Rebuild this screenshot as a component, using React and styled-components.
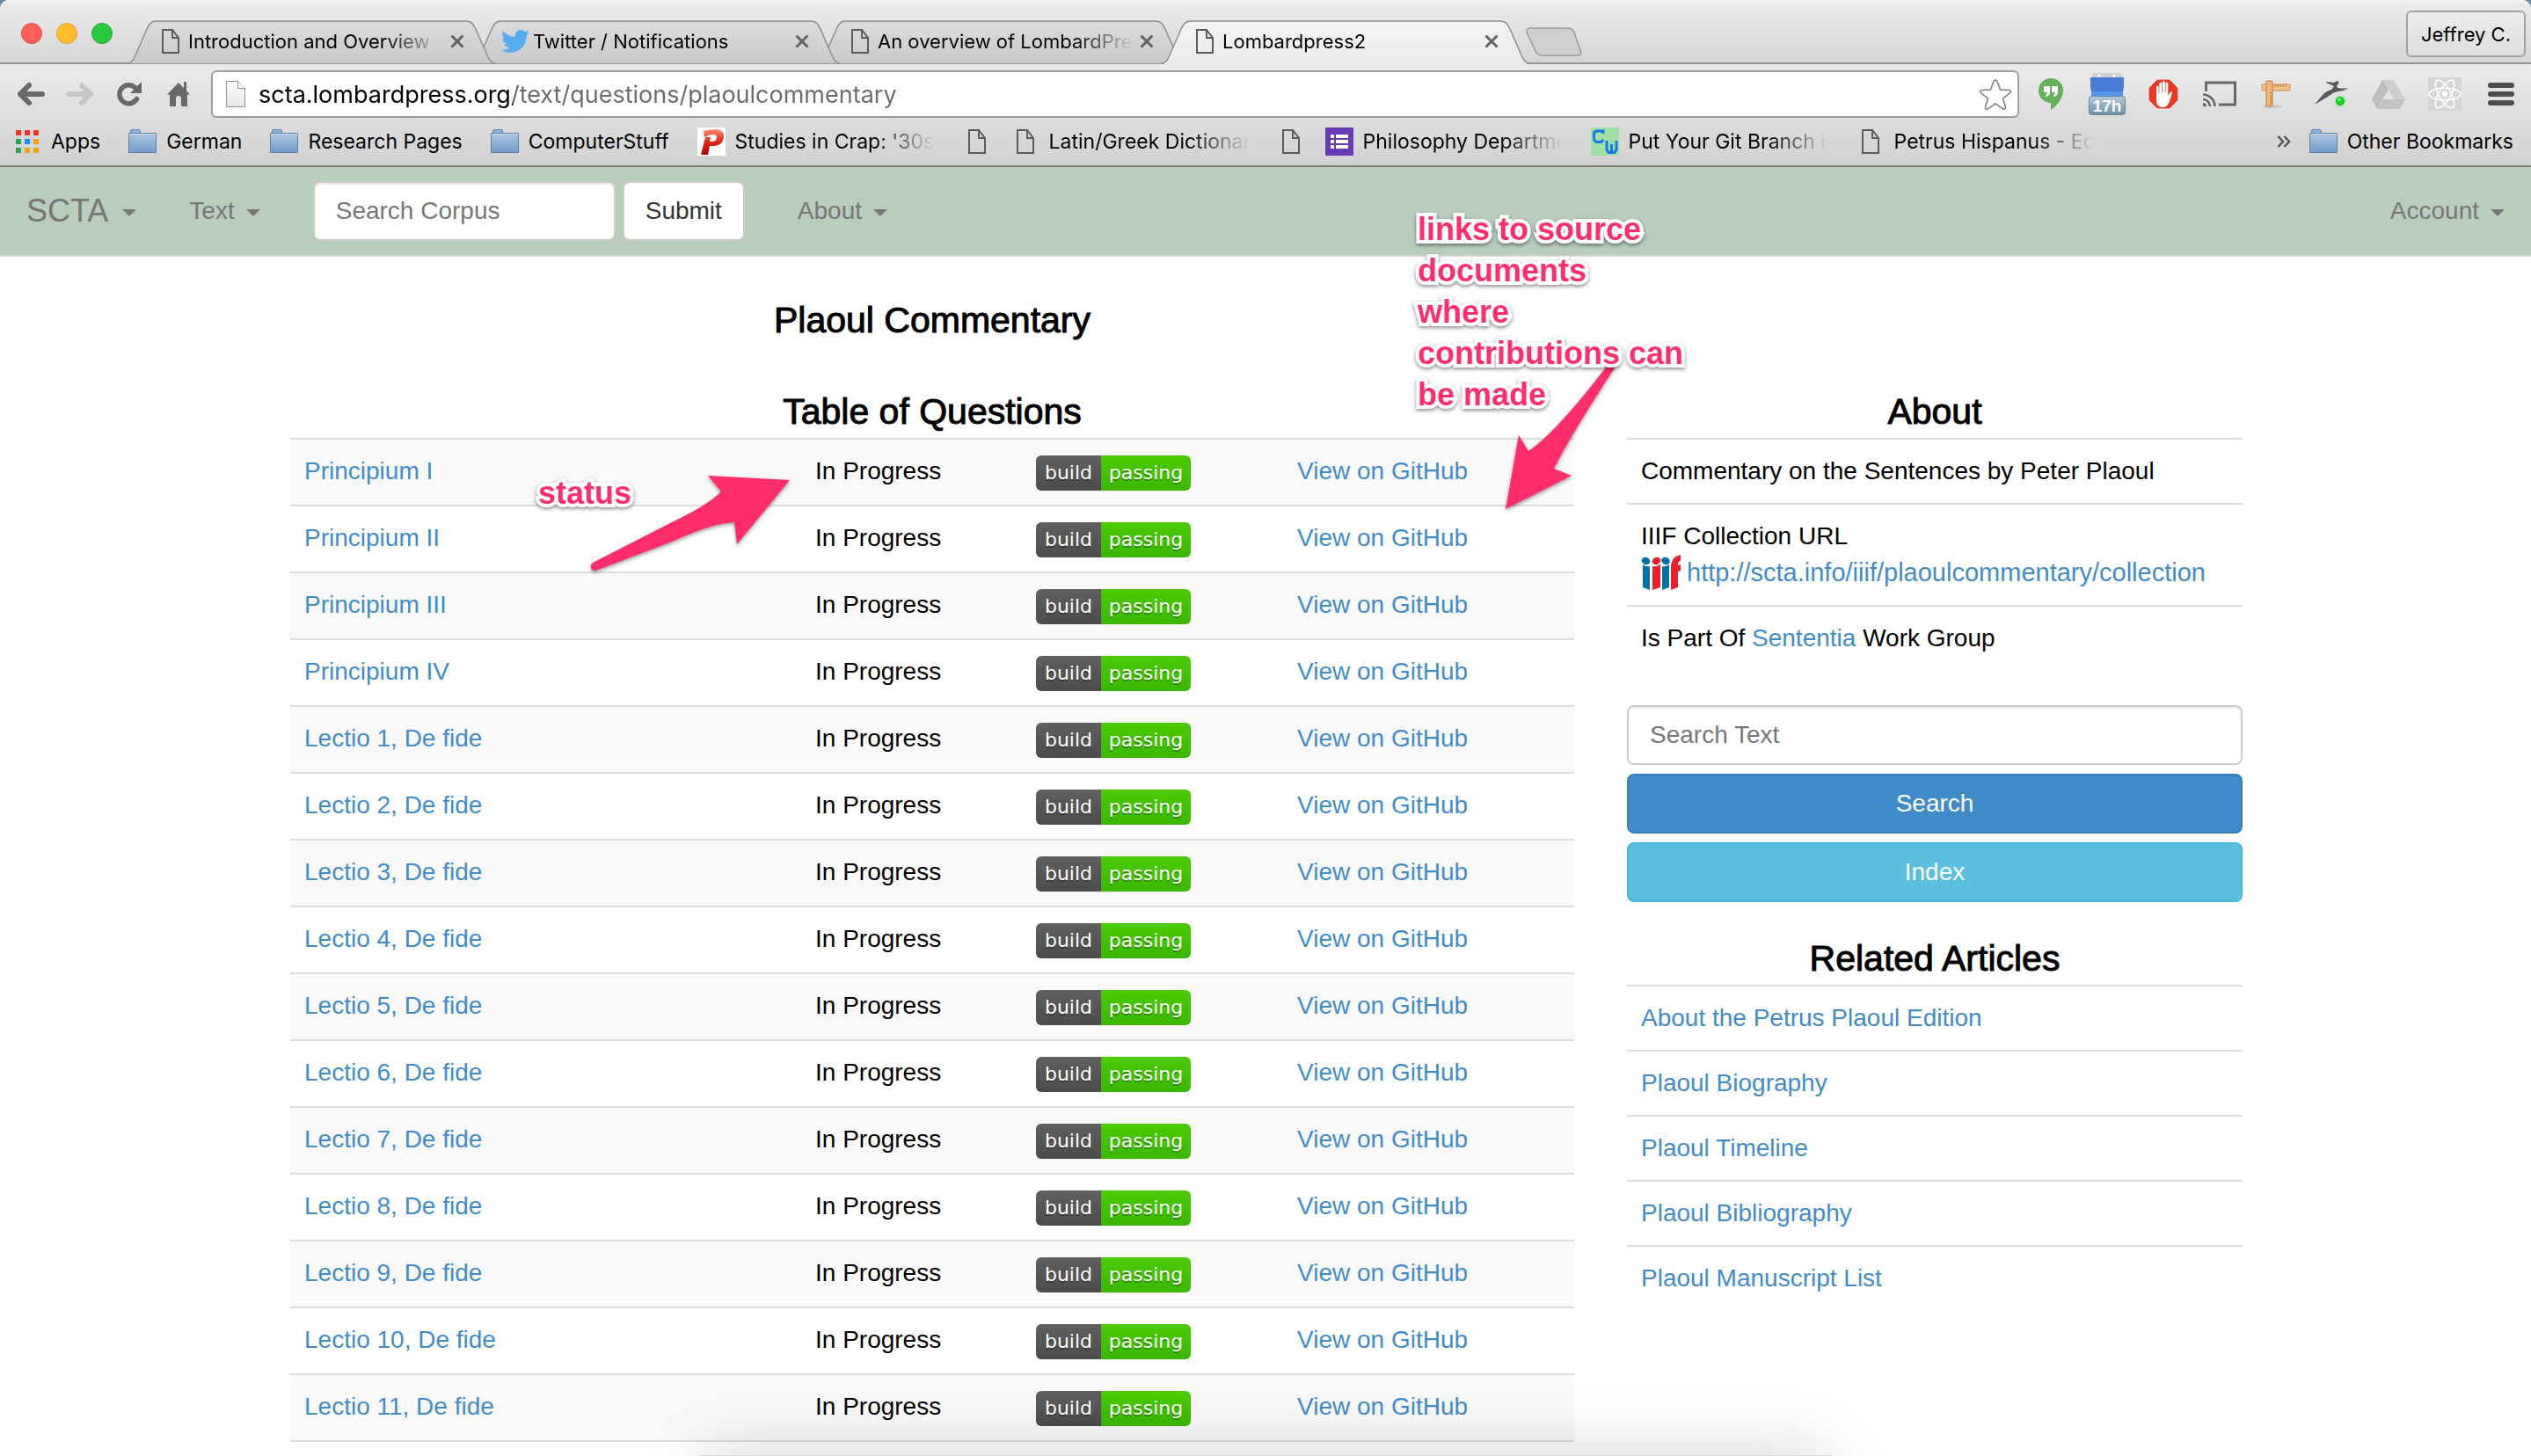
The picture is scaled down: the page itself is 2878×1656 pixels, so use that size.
import React from "react";
import styled, { createGlobalStyle, css } from "styled-components";
import { FaTwitter, FaReact } from "react-icons/fa";

const sans = `"Liberation Sans", Arial, Helvetica, sans-serif`;
const chromeFont = `Inter, Roboto, "Liberation Sans", sans-serif`;
const pink = "#ff2d6b";

const Global = createGlobalStyle`
  *, *::before, *::after { box-sizing: border-box; }
  body { margin: 0; background: #7189a3; font-family: ${sans}; font-size: 28px; line-height: 40px; color: #000; }
  button, input { font: inherit; color: inherit; margin: 0; }
  svg { display: block; flex: none; }
`;

/* ---------- window chrome ---------- */

const Window = styled.div`
  position: relative;
  display: flex;
  flex-direction: column;
  min-height: 100vh;
  overflow: hidden;
  background: #fff;
  border-radius: 10px 10px 0 0;
`;

const TabStrip = styled.header`
  display: flex;
  align-items: flex-end;
  height: 73px;
  padding: 0 6px 0 24px;
  background: linear-gradient(#f4f4f4, #eaeaea 6px, #d6d6d6);
  border-bottom: 2px solid #949494;
  font: 22px/30px ${chromeFont};
`;

const Lights = styled.div`
  display: flex;
  gap: 16px;
  width: 134px;
  padding-bottom: 21px;
`;

const Light = styled.button`
  width: 24px;
  height: 24px;
  padding: 0;
  border: 1px solid ${(p) => p.$edge};
  border-radius: 50%;
  background: ${(p) => p.$fill};
`;

const TabList = styled.nav`
  display: flex;
  isolation: isolate;
`;

const TabItem = styled.div`
  position: relative;
  z-index: ${(p) => p.$z};
  display: flex;
  align-items: center;
  width: 392px;
  height: 48px;
  padding: 0 22px 0 24px;
  gap: 8px;
`;

const TabShape = styled.svg`
  position: absolute;
  left: -14px;
  top: 0;
  width: 420px;
  height: 51px;
`;

const TabIcon = styled.span`
  position: relative;
  display: flex;
  justify-content: center;
  width: 24px;
  color: #55acee;
`;

const TabTitle = styled.a`
  position: relative;
  flex: 1;
  white-space: nowrap;
  color: #000;
  text-decoration: none;
  mask-image: linear-gradient(to right, #000 calc(100% - 70px), transparent);
`;

const CloseButton = styled.button`
  position: relative;
  width: 16px;
  height: 16px;
  padding: 0;
  border: 0;
  background: none;
`;

const NewTab = styled.button`
  align-self: flex-end;
  margin: 0 0 6px 8px;
  padding: 0;
  border: 0;
  background: none;
`;

const Profile = styled.button`
  height: 53px;
  margin: 0 0 6px auto;
  padding: 0 15px;
  border: 2px solid #a2a2a2;
  border-radius: 6px;
  background: linear-gradient(#ececec, #dedede);
`;

const Toolbars = styled.div`
  padding-top: 7px;
  border-bottom: 2px solid #7d7d7d;
  background: linear-gradient(#ebebeb, #d1d1d1);
  font: 23px/30px ${chromeFont};
`;

const AddressRow = styled.div`
  display: flex;
  align-items: center;
  padding: 0 2px 0 7px;
`;

const ToolButton = styled.button`
  display: flex;
  align-items: center;
  justify-content: center;
  width: ${(p) => p.$w || 56}px;
  height: 54px;
  padding: 0;
  border: 0;
  background: none;
`;

const Omnibox = styled.form`
  display: flex;
  flex: 1;
  align-items: center;
  height: 54px;
  margin: 0 4px 0 9px;
  padding: 0 6px 0 14px;
  border: 2px solid #9c9c9c;
  border-radius: 6px;
  background: #fff;
`;

const UrlInput = styled.input`
  flex: 1;
  min-width: 0;
  height: 40px;
  margin-left: 12px;
  padding: 0 0 0 2px;
  border: 0;
  outline: 0;
  font-size: 27px;
  background: linear-gradient(to right, #000 291px, #6a6a6a 0);
  background-clip: text;
  -webkit-text-fill-color: transparent;
`;

const Bookmarks = styled.nav`
  display: flex;
  align-items: center;
  height: 54px;
  padding: 0 20px 0 15px;
`;

const Bookmark = styled.a`
  display: flex;
  flex: none;
  align-items: center;
  gap: 11px;
  margin-right: ${(p) => (p.$bare ? 23 : 32)}px;
  color: #000;
  text-decoration: none;
  white-space: nowrap;
`;

const BookmarkIcon = styled.span`
  display: flex;
  justify-content: center;
  width: 32px;
  height: 32px;
  align-items: center;
`;

const BookmarkLabel = styled.span`
  ${(p) =>
    p.$cut &&
    css`
      width: 227px;
      mask-image: linear-gradient(to right, #000 calc(100% - 70px), transparent);
    `}
`;

const BookmarkEnd = styled.div`
  display: flex;
  align-items: center;
  gap: 21px;
  margin-left: auto;

  ${Bookmark} {
    margin-right: 0;
  }
`;

/* ---------- site navigation ---------- */

const Navbar = styled.nav`
  display: flex;
  align-items: center;
  height: 102px;
  background: #b9cdbd;
  border-bottom: 2px solid #d6d6d6;
`;

const NavItem = styled.button`
  display: flex;
  align-items: center;
  gap: ${(p) => (p.$brand ? 16 : 13)}px;
  padding: 30px;
  border: 0;
  background: none;
  color: #777;
  font-size: ${(p) => (p.$brand ? 36 : 28)}px;
  margin-left: ${(p) => (p.$end ? "auto" : 0)};

  &::after {
    content: "";
    margin-top: 4px;
    border: 8px solid transparent;
    border-top-color: #777;
    border-bottom: 0;
  }
`;

const NavForm = styled.form`
  display: flex;
  gap: 8px;
  padding: 0 30px;
`;

const field = css`
  height: 68px;
  padding: 0 24px;
  border: 2px solid #ccc;
  border-radius: 8px;
`;

const TextField = styled.input`
  ${field}
  width: ${(p) => (p.$block ? "100%" : "344px")};
  background: #fff;
  box-shadow: inset 0 2px 2px rgba(0, 0, 0, 0.075);

  &::placeholder {
    color: #777;
    opacity: 1;
  }
`;

const Button = styled.button`
  ${field}
  width: ${(p) => (p.$block ? "100%" : "auto")};
  background: ${(p) => p.$bg || "#fff"};
  border-color: ${(p) => p.$edge || "#ccc"};
  color: ${(p) => (p.$bg ? "#fff" : "#333")};
`;

/* ---------- page ---------- */

const Page = styled.main`
  display: grid;
  grid-template-columns: minmax(0, 1460fr) minmax(0, 700fr);
  column-gap: 60px;
  width: 100%;
  max-width: 2222px;
  margin: 0 auto;
  padding: 50px 0 16px 2px;
`;

const Heading = styled.h2`
  margin: 0 0 8px;
  font-size: 41px;
  line-height: 44px;
  font-weight: 400;
  text-align: center;
  -webkit-text-stroke: 1px #000;
`;

const Title = styled(Heading).attrs({ as: "h1" })`
  grid-column: 1;
  margin: 0 0 60px;
`;

const Column = styled.section`
  grid-column: ${(p) => p.$col};
`;

const Table = styled.table`
  width: 100%;
  border-spacing: 0;
  table-layout: fixed;
  border-bottom: 2px solid #ddd;

  td {
    padding: 16px;
    border-top: 2px solid #ddd;
    vertical-align: top;
  }
  tr:nth-child(odd) td {
    background: #f9f9f9;
  }
`;

const Col = styled.col`
  width: ${(p) => p.$w};
`;

const Link = styled.a`
  color: #428bca;
  text-decoration: none;
`;

const Badge = styled.span`
  display: flex;
  width: 176px;
  height: 40px;
  margin-top: 2px;
  border-radius: 6px;
  overflow: hidden;
  font: 22px/40px "DejaVu Sans", Verdana, sans-serif;
  color: #fff;
  text-shadow: 0 2px 0 rgba(1, 1, 1, 0.3);
`;

const BadgePart = styled.span`
  flex: ${(p) => p.$flex};
  text-align: center;
  background: linear-gradient(${(p) => p.$from}, ${(p) => p.$to});
`;

const List = styled.ul`
  margin: 0;
  padding: 0;
  list-style: none;
`;

const ListRow = styled.li`
  padding: 16px;
  border-top: 2px solid #ddd;
`;

const LogoLine = styled.div`
  display: flex;
  align-items: center;
  gap: 6px;
  height: 42px;
  font-size: 29px;
  white-space: nowrap;
`;

const SearchForm = styled.form`
  display: grid;
  gap: 10px;
  margin: 40px 0 42px;
`;

/* ---------- annotations over the page ---------- */

const Note = styled.p`
  position: absolute;
  left: ${(p) => p.$x}px;
  top: ${(p) => p.$y}px;
  margin: 0;
  font: bold 36px/47px ${sans};
  color: ${pink};
  white-space: pre;
  -webkit-text-stroke: 8px #fff;
  paint-order: stroke fill;
  stroke-linejoin: round;
  filter: drop-shadow(0 2px 2px rgba(0, 0, 0, 0.45));
`;

const Arrow = styled.svg`
  position: absolute;
  left: ${(p) => p.$x}px;
  top: ${(p) => p.$y}px;
  overflow: visible;
  filter: drop-shadow(0 2px 2px rgba(0, 0, 0, 0.4));
`;

const DockShadow = styled.div`
  position: absolute;
  left: 50%;
  top: 1655px;
  width: 1286px;
  height: 60px;
  transform: translateX(-50%);
  background: #dcdcdc;
  box-shadow: 0 -8px 70px rgba(0, 0, 0, 0.15);
  pointer-events: none;
`;

/* ---------- icons ---------- */

const FileIcon = () => (
  <svg width="20" height="28" viewBox="0 0 20 28" fill="none" stroke="#5c5c5c" strokeWidth="2">
    <path d="M1 1h11l7 9v17H1z" />
    <path d="M12 1v9h7" />
  </svg>
);

const PageIcon = () => (
  <svg width="24" height="32" viewBox="0 0 24 32">
    <defs>
      <linearGradient id="pg" x1="0" y1="0" x2="0" y2="1">
        <stop offset="0" stopColor="#fff" />
        <stop offset="1" stopColor="#e6e6e6" />
      </linearGradient>
    </defs>
    <path d="M1.500 1.500h13l8 8v21h-21z" fill="url(#pg)" stroke="#8f8f8f" />
    <path d="M14.500 1.500v8h8" fill="#fff" stroke="#8f8f8f" />
  </svg>
);

const FolderIcon = () => (
  <svg width="32" height="28" viewBox="0 0 32 28">
    <defs>
      <linearGradient id="fo" x1="0" y1="0" x2="0" y2="1">
        <stop offset="0" stopColor="#aec8e2" />
        <stop offset="1" stopColor="#6f9ac6" />
      </linearGradient>
    </defs>
    <path d="M2.500 5V2q0-1.500 1.500-1.500h8q1.500 0 1.500 1.500v3z" fill="#8fb1d4" stroke="#5e83aa" />
    <path d="M.5 4.500h31v22H.5z" fill="url(#fo)" stroke="#5e83aa" />
    <path d="M1 5.500h30" stroke="#c9dbee" />
  </svg>
);

const AppsIcon = () => {
  const c = ["#f8312f", "#f8312f", "#f8312f", "#2fa15c", "#1a8cff", "#f0a30a", "#2fa15c", "#f0a30a", "#f0a30a"];
  return (
    <svg width="26" height="26" viewBox="0 0 26 26">
      {c.map((f, i) => (
        <rect key={i} x={(i % 3) * 10} y={Math.floor(i / 3) * 10} width="6" height="6" fill={f} />
      ))}
    </svg>
  );
};

const PIcon = () => (
  <svg width="32" height="32" viewBox="0 0 32 32">
    <defs>
      <linearGradient id="pi" x1="0" y1="0" x2="0" y2="1">
        <stop offset="0" stopColor="#ff8a70" />
        <stop offset=".5" stopColor="#e62314" />
        <stop offset="1" stopColor="#a30a05" />
      </linearGradient>
    </defs>
    <rect width="32" height="32" fill="#fff" />
    <path d="M7 4Q14 2 22 2q8 1 8 8 0 10-11 11h-5l-2 10H4L9 11h6l-1 5h4q4-1 4-5 0-3-4-3-5 0-10 3z" fill="url(#pi)" />
  </svg>
);

const FormsIcon = () => (
  <svg width="32" height="32" viewBox="0 0 32 32">
    <rect width="32" height="32" rx="1" fill="#673ab7" />
    <path d="M6 8h4v4H6zm6 0h14v4H12zM6 14h4v4H6zm6 0h14v4H12zM6 20h4v4H6zm6 0h14v4H12z" fill="#fff" />
  </svg>
);

const CwIcon = () => (
  <svg width="32" height="32" viewBox="0 0 32 32">
    <rect width="32" height="32" fill="#a0e0a4" />
    <path d="M14 7V4H6L3.500 6v8L6 16.500h6l2-3M18 15v10l2 3.500h7l2-3.500V15M23.500 19v8" fill="none" stroke="#1478f0" strokeWidth="3" />
  </svg>
);

const Arrowhead = ({ color, flip }) => (
  <svg width="32" height="28" viewBox="0 0 32 28" fill="none" stroke={color} strokeWidth="6" strokeLinecap="round" strokeLinejoin="round">
    <path d={flip ? "M3 14h25M18 4l10 10-10 10" : "M29 14H4M14 4L4 14l10 10"} />
  </svg>
);

const ReloadIcon = () => (
  <svg width="28" height="28" viewBox="0 0 28 28">
    <path d="M22.500 19.500A10.500 10.500 0 1 1 20.500 6.500" fill="none" stroke="#686868" strokeWidth="5.500" strokeLinecap="round" />
    <path d="M28 0v13H15z" fill="#686868" />
  </svg>
);

const HomeIcon = () => (
  <svg width="26" height="28" viewBox="0 0 26 28">
    <path d="M13 1l6 6V0h3v10l4 4.500h-3V28h-7v-9q0-3-3-3t-3 3v9H3V14.500H0z" fill="#686868" />
  </svg>
);

const StarIcon = () => (
  <svg width="38" height="38" viewBox="0 0 38 38">
    <path
      d="M19 3q1.500 0 2 1.500L24.500 14l10 .4q1.800.2 2 1.400 0 1-1 2L27.500 24l3 10q.3 1.400-.6 2-1 .6-2.200-.2L19 30l-8.700 5.800q-1.200.8-2.200.2-.9-.6-.6-2l3-10-8-6.200q-1-1-1-2 .2-1.200 2-1.400l10-.4L17 4.500Q17.500 3 19 3z"
      fill="#fff"
      stroke="#7a7a7a"
      strokeWidth="1.500"
    />
  </svg>
);

const HangoutsIcon = () => (
  <svg width="28" height="36" viewBox="0 0 28 36">
    <path d="M14 0a14 14 0 0 1 14 14c0 9-7 17-14 22v-8A14 14 0 1 1 14 0z" fill="#63b257" />
    <path d="M6 9h7v7q0 4-5 5v-2q2-1 2-3H6zm9 0h7v7q0 4-5 5v-2q2-1 2-3h-4z" fill="#fff" />
  </svg>
);

const CalendarIcon = () => (
  <svg width="42" height="48" viewBox="0 0 42 48">
    <defs>
      <linearGradient id="ca" x1="0" y1="0" x2="0" y2="1">
        <stop offset="0" stopColor="#b3cbdc" />
        <stop offset="1" stopColor="#6f8ea4" />
      </linearGradient>
    </defs>
    <path d="M5 0h32l2 6H3z" fill="#cfcfcf" />
    <circle cx="12" cy="3" r="1.500" fill="#fff" />
    <circle cx="29" cy="3" r="1.500" fill="#fff" />
    <path d="M2 5h38v10l-2 13H4L2 15z" fill="#467bd8" />
    <path d="M3 21h36v7H3z" fill="#5596f2" />
    <rect x=".5" y="26.500" width="41" height="21" rx="3" fill="url(#ca)" stroke="#6c889c" />
    <text x="21" y="44" textAnchor="middle" fontFamily="Liberation Sans, sans-serif" fontSize="19" fontWeight="bold" fill="#fff">
      17h
    </text>
  </svg>
);

const BlockIcon = () => (
  <svg width="36" height="36" viewBox="0 0 36 36">
    <path d="M11 1h14l10 10v14L25 35H11L1 25V11z" fill="#ee3826" stroke="#fff" />
    <path
      d="M10 20V10q0-1.500 1.300-1.500T12.600 10v7h.7V6q0-1.500 1.500-1.500T16.300 6v10h.7V4.500Q17 3 18.400 3t1.400 1.500V16h.7V6q0-1.500 1.400-1.500T23.300 6v14l2-3.500q1.200-1.600 3-.6L25 26q-2 7-7.500 7Q10 33 10 25z"
      fill="#fff"
    />
  </svg>
);

const CastIcon = () => (
  <svg width="38" height="30" viewBox="0 0 38 30" fill="none" stroke="#666" strokeWidth="3">
    <path d="M3.500 12V2h33v25H18" />
    <path d="M0 15.500A13.500 13.500 0 0 1 13.500 29M0 21a8 8 0 0 1 8 8" strokeWidth="2.500" />
    <path d="M0 25a4 4 0 0 1 4 4H0z" fill="#666" stroke="none" />
  </svg>
);

const RulerIcon = () => (
  <svg width="34" height="32" viewBox="0 0 34 32">
    <ellipse cx="13" cy="30" rx="11" ry="2" fill="#b8b8b8" opacity=".6" />
    <rect x="1" y="5" width="32" height="7" rx="1" fill="#f5c48a" stroke="#c98646" />
    <rect x="6" y="1" width="7" height="29" rx="1" fill="#f0b878" stroke="#c07a3c" />
    <path d="M16 5v3M19 5v3M22 5v3M25 5v3M28 5v3M10 15h3M10 18h3M10 21h3M10 24h3M10 27h3" stroke="#b3702f" />
  </svg>
);

const RunnerIcon = () => (
  <svg width="40" height="32" viewBox="0 0 40 32">
    <defs>
      <radialGradient id="gl">
        <stop offset="0" stopColor="#14d914" stopOpacity=".6" />
        <stop offset="1" stopColor="#14d914" stopOpacity="0" />
      </radialGradient>
    </defs>
    <path d="M13 2l9 1q3-3 6-1l-1 1q1 2-2 3l1 3q7 1 13 0-5 3-12 4-6 1-9 4L0 28 9 17q5-5 10-6l3-4-9-4z" fill="#5a5a5a" />
    <circle cx="29" cy="24" r="8" fill="url(#gl)" />
    <circle cx="29" cy="24" r="4.500" fill="#10e010" stroke="#0fae0f" />
    <circle cx="28" cy="22.500" r="1.500" fill="#a5ffa5" />
  </svg>
);

const DriveIcon = () => (
  <svg width="38" height="33" viewBox="0 0 38 33">
    <path d="M12 0h13L6 33 0 22z" fill="#bdbdbd" />
    <path d="M12 0h13l13 22H25z" fill="#cfcfcf" />
    <path d="M13 22h25l-6 11H6z" fill="#c3c3c3" />
    <path d="M19 11l6 11H13z" fill="#e3e3e3" />
  </svg>
);

const ReactBox = styled.span`
  display: flex;
  align-items: center;
  justify-content: center;
  width: 38px;
  height: 38px;
  background: #d5d5d5;
  color: #fff;
`;

const MenuIcon = () => (
  <svg width="32" height="28" viewBox="0 0 32 28" stroke="#4c4c4c" strokeWidth="6" strokeLinecap="round">
    <path d="M4 4h24M4 14h24M4 24h24" />
  </svg>
);

const IiifLogo = () => (
  <svg width="46" height="40" viewBox="0 0 46 40">
    <g fill="#0072a3">
      <path d="M2 11q4 3 8 2v27l-8-3z" />
      <ellipse cx="5.500" cy="7" rx="5" ry="4" transform="rotate(25 5.500 7)" />
      <path d="M24 13q4 1 8-2v26l-8 3z" />
      <ellipse cx="28" cy="7" rx="5" ry="4" transform="rotate(25 28 7)" />
    </g>
    <g fill="#ed1f2c">
      <path d="M13 13q5 1 9-2v26l-9 3z" />
      <ellipse cx="17.500" cy="7" rx="5" ry="4" transform="rotate(-25 17.500 7)" />
      <path d="M34 40V12Q36 1 45 0v7q-3 0-3 5l3-1v7l-3 1v18z" />
    </g>
  </svg>
);

const TabBack = ({ active }) => (
  <TabShape viewBox="0 0 420 51">
    <defs>
      <linearGradient id={active ? "ta" : "tb"} x1="0" y1="0" x2="0" y2="1">
        <stop offset="0" stopColor={active ? "#f4f4f4" : "#dcdcdd"} />
        <stop offset="1" stopColor={active ? "#ebebeb" : "#c9c9cb"} />
      </linearGradient>
    </defs>
    <path
      d="M0 49q6 0 9-7L24 8q3-7 10-7h352q7 0 10 7l15 34q3 7 9 7"
      fill={`url(#${active ? "ta" : "tb"})`}
      stroke="#8e8e8e"
      strokeWidth="1.500"
    />
    {active && <path d="M4 48.500h412V51H4z" fill="#ebebeb" />}
  </TabShape>
);

/* ---------- data ---------- */

const tabs = [
  { title: "Introduction and Overview" },
  { title: "Twitter / Notifications", icon: <FaTwitter size={32} /> },
  { title: "An overview of LombardPre" },
  { title: "Lombardpress2", active: true },
];

const bookmarks = [
  { label: "Apps", icon: <AppsIcon /> },
  { label: "German", icon: <FolderIcon /> },
  { label: "Research Pages", icon: <FolderIcon /> },
  { label: "ComputerStuff", icon: <FolderIcon /> },
  { label: "Studies in Crap: '30s", icon: <PIcon />, cut: true },
  { icon: <FileIcon /> },
  { label: "Latin/Greek Dictionar", icon: <FileIcon />, cut: true },
  { icon: <FileIcon /> },
  { label: "Philosophy Departme", icon: <FormsIcon />, cut: true },
  { label: "Put Your Git Branch i", icon: <CwIcon />, cut: true },
  { label: "Petrus Hispanus - Ed", icon: <FileIcon />, cut: true },
];

const extensions = [
  ["Hangouts", <HangoutsIcon />],
  ["Calendar", <CalendarIcon />],
  ["Ad blocker", <BlockIcon />],
  ["Cast", <CastIcon />],
  ["Ruler", <RulerIcon />],
  ["Runner", <RunnerIcon />],
  ["Drive", <DriveIcon />],
  ["React tools", <ReactBox><FaReact size={38} /></ReactBox>],
  ["Menu", <MenuIcon />],
];

const questions = [
  ...["I", "II", "III", "IV"].map((n) => `Principium ${n}`),
  ...Array.from({ length: 11 }, (_, i) => `Lectio ${i + 1}, De fide`),
];

const articles = [
  "About the Petrus Plaoul Edition",
  "Plaoul Biography",
  "Plaoul Timeline",
  "Plaoul Bibliography",
  "Plaoul Manuscript List",
];

const stop = (e) => e.preventDefault();

export default function App() {
  return (
    <Window>
      <Global />
      <TabStrip>
        <Lights>
          <Light $fill="#ff5f57" $edge="#e2463f" aria-label="Close window" />
          <Light $fill="#ffbd2e" $edge="#e09e28" aria-label="Minimize window" />
          <Light $fill="#28ca41" $edge="#1aab29" aria-label="Zoom window" />
        </Lights>
        <TabList>
          {tabs.map((t, i) => (
            <TabItem key={t.title} $z={t.active ? 9 : 8 - i}>
              <TabBack active={t.active} />
              <TabIcon>{t.icon || <FileIcon />}</TabIcon>
              <TabTitle href="#">{t.title}</TabTitle>
              <CloseButton aria-label={`Close ${t.title}`}>
                <svg width="16" height="16" viewBox="0 0 16 16" stroke="#636363" strokeWidth="3">
                  <path d="M1.500 1.500l13 13M14.500 1.500l-13 13" />
                </svg>
              </CloseButton>
            </TabItem>
          ))}
        </TabList>
        <NewTab aria-label="New tab">
          <svg width="65" height="34" viewBox="0 0 65 34">
            <path d="M6 1h42q6 0 8 5l7 20q2 6-3 6H20q-6 0-8-5L2 6q-1-5 4-5z" fill="#d0d0d1" stroke="#999" strokeWidth="1.500" />
          </svg>
        </NewTab>
        <Profile>Jeffrey C.</Profile>
      </TabStrip>

      <Toolbars>
        <AddressRow>
          <ToolButton aria-label="Back"><Arrowhead color="#686868" /></ToolButton>
          <ToolButton aria-label="Forward"><Arrowhead color="#c6c6c6" flip /></ToolButton>
          <ToolButton aria-label="Reload"><ReloadIcon /></ToolButton>
          <ToolButton aria-label="Home"><HomeIcon /></ToolButton>
          <Omnibox onSubmit={stop}>
            <PageIcon />
            <UrlInput aria-label="Address" defaultValue="scta.lombardpress.org/text/questions/plaoulcommentary" />
            <StarIcon />
          </Omnibox>
          {extensions.map(([name, icon]) => (
            <ToolButton key={name} $w={64} aria-label={name}>{icon}</ToolButton>
          ))}
        </AddressRow>
        <Bookmarks>
          {bookmarks.map((b, i) => (
            <Bookmark key={i} href="#" $bare={!b.label} aria-label={b.label || "Bookmark"}>
              <BookmarkIcon>{b.icon}</BookmarkIcon>
              {b.label && <BookmarkLabel $cut={b.cut}>{b.label}</BookmarkLabel>}
            </Bookmark>
          ))}
          <BookmarkEnd>
            <svg width="16" height="14" viewBox="0 0 16 14" fill="none" stroke="#555" strokeWidth="2.500">
              <path d="M1.500 1l5.500 6-5.500 6M8.500 1L14 7l-5.500 6" />
            </svg>
            <Bookmark href="#">
              <BookmarkIcon><FolderIcon /></BookmarkIcon>
              <BookmarkLabel>Other Bookmarks</BookmarkLabel>
            </Bookmark>
          </BookmarkEnd>
        </Bookmarks>
      </Toolbars>

      <Navbar>
        <NavItem $brand>SCTA</NavItem>
        <NavItem>Text</NavItem>
        <NavForm onSubmit={stop}>
          <TextField aria-label="Search Corpus" placeholder="Search Corpus" />
          <Button>Submit</Button>
        </NavForm>
        <NavItem>About</NavItem>
        <NavItem $end>Account</NavItem>
      </Navbar>

      <Page>
        <Title>Plaoul Commentary</Title>
        <Column $col={1}>
          <Heading>Table of Questions</Heading>
          <Table>
            <colgroup>
              <Col $w="auto" />
              <Col $w="251px" />
              <Col $w="297px" />
              <Col $w="331px" />
            </colgroup>
            <tbody>
              {questions.map((q) => (
                <tr key={q}>
                  <td><Link href="#">{q}</Link></td>
                  <td>In Progress</td>
                  <td>
                    <Badge>
                      <BadgePart $flex="74" $from="#606060" $to="#4b4b4b">build</BadgePart>
                      <BadgePart $flex="102" $from="#4bcc02" $to="#3ab800">passing</BadgePart>
                    </Badge>
                  </td>
                  <td><Link href="#">View on GitHub</Link></td>
                </tr>
              ))}
            </tbody>
          </Table>
        </Column>
        <Column as="aside" $col={2}>
          <Heading>About</Heading>
          <List>
            <ListRow>Commentary on the Sentences by Peter Plaoul</ListRow>
            <ListRow>
              IIIF Collection URL
              <LogoLine>
                <IiifLogo />
                <Link href="#">http://scta.info/iiif/plaoulcommentary/collection</Link>
              </LogoLine>
            </ListRow>
            <ListRow>
              Is Part Of <Link href="#">Sententia</Link> Work Group
            </ListRow>
          </List>
          <SearchForm onSubmit={stop}>
            <TextField $block aria-label="Search Text" placeholder="Search Text" />
            <Button $block $bg="#428bca" $edge="#357ebd">Search</Button>
            <Button $block type="button" $bg="#5bc0de" $edge="#46b8da">Index</Button>
          </SearchForm>
          <Heading>Related Articles</Heading>
          <List>
            {articles.map((a) => (
              <ListRow key={a}><Link href="#">{a}</Link></ListRow>
            ))}
          </List>
        </Column>
      </Page>

      <Arrow $x={670} $y={540} width="230" height="110" viewBox="0 0 230 110">
        <path d="M228 6L135 1l15 18Q136 34 94 54L4 100q-4 4-1 8 3 2 7 0L94 76Q140 55 165 54l3 25z" fill={pink} />
      </Arrow>
      <Arrow $x={1710} $y={410} width="130" height="170" viewBox="0 0 130 170">
        <path d="M2 169L17 85l11 18Q60 82 122 0l8 2Q74 88 57 123l20 8z" fill={pink} />
      </Arrow>
      <Note $x={612} $y={537}>status</Note>
      <Note $x={1612} $y={237}>{"links to source\ndocuments\nwhere\ncontributions can\nbe made"}</Note>
      <DockShadow />
    </Window>
  );
}
